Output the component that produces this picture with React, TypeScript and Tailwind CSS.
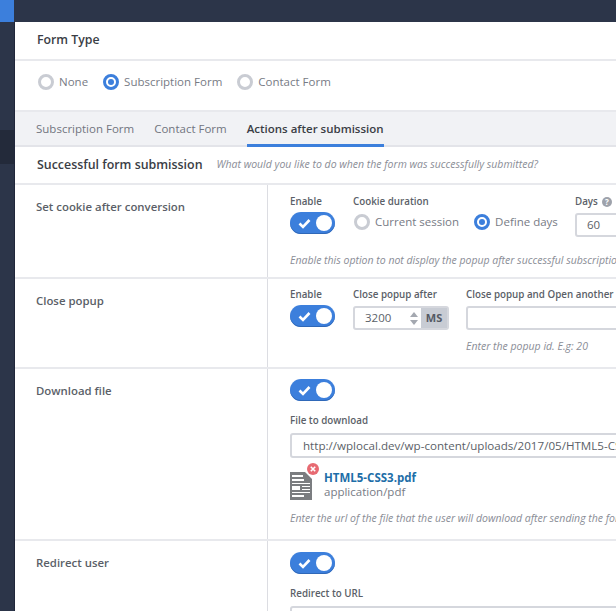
import React from "react";

const font = { fontFamily: '"Open Sans", "Noto Sans", sans-serif' };

function Radio({ on, label }: { on?: boolean; label: string }) {
  return (
    <div className="flex items-center gap-[5px] shrink-0">
      {on ? (
        <span className="w-[16px] h-[16px] rounded-full border-[3px] border-[#3c7fdc] flex items-center justify-center bg-white">
          <span className="w-[6px] h-[6px] rounded-full bg-[#3c7fdc]" />
        </span>
      ) : (
        <span className="w-[16px] h-[16px] rounded-full border-[3px] border-[#c9ccd3] bg-white" />
      )}
      <span className="text-[11.5px] text-[#777b85]">{label}</span>
    </div>
  );
}

function Toggle() {
  return (
    <div className="w-[45px] h-[22px] rounded-full bg-[#3c7fdc] flex items-center justify-between pl-[8px] pr-[3px] shadow-[inset_0_-1px_0_#2f68b8]">
      <svg width="13" height="11" viewBox="0 0 13 11" fill="none">
        <path d="M1.5 5.5 L5 9 L11.5 2" stroke="white" strokeWidth="2.6" />
      </svg>
      <span className="w-[16px] h-[16px] rounded-full bg-white" />
    </div>
  );
}

function Label({ children }: { children: React.ReactNode }) {
  return <div className="text-[9.8px] leading-[14px] text-[#5b5f68] font-semibold whitespace-nowrap">{children}</div>;
}

function Hint({ children }: { children: React.ReactNode }) {
  return <div className="text-[10.5px] italic text-[#8a8d96] whitespace-nowrap leading-[14px]">{children}</div>;
}

function Row({ title, className, children }: { title: string; className: string; children: React.ReactNode }) {
  return (
    <div className={`flex border-b-2 border-[#e8e9ed] ${className}`}>
      <div className="w-[253px] shrink-0 border-r border-[#dcdde2] pl-[21px] pt-[13px] text-[11.4px] font-semibold text-[#5b5f68]">
        {title}
      </div>
      <div className="pl-[22px] min-w-0 w-[700px] shrink-0">{children}</div>
    </div>
  );
}

export default function App() {
  return (
    <div className="w-[616px] h-[611px] overflow-hidden flex bg-[#2c3549]" style={font}>
      <div className="w-[14px] shrink-0 flex flex-col">
        <div className="h-[22px] bg-[#3c7fdc] shrink-0" />
        <div className="h-[108px] shrink-0 bg-[#2c3549]" />
        <div className="h-[34px] shrink-0 bg-[#232a3a]" />
      </div>
      <div className="flex-1 min-w-0 flex flex-col">
        <div className="h-[22px] bg-[#2c3549] shrink-0" />
        <div className="flex-1 bg-white border-l border-[#20263a] flex flex-col overflow-hidden">
          <div className="h-[39px] shrink-0 border-b-2 border-[#e8e9ed] flex items-center pl-[22px] text-[12.3px] font-semibold text-[#3a3d45]">
            Form Type
          </div>
          <div className="h-[51px] shrink-0 border-b-2 border-[#e8e9ed] flex items-start pt-[12px] pl-[23px] gap-[15px]">
            <Radio label="None" />
            <Radio on label="Subscription Form" />
            <Radio label="Contact Form" />
          </div>
          <div className="h-[35px] shrink-0 bg-[#f1f2f5] border-b-2 border-[#e3e4e9] flex items-start pl-[21px] gap-[20px] text-[11.5px] text-[#72757f]">
            <span className="pt-[8px]">Subscription Form</span>
            <span className="pt-[8px]">Contact Form</span>
            <span className="h-[35px] pt-[8px] border-b-[3px] border-[#3c7fdc] font-semibold text-[#3a3d45]">
              Actions after submission
            </span>
          </div>
          <div className="h-[38px] shrink-0 border-b-2 border-[#e8e9ed] flex items-center pl-[22px] gap-[14px] whitespace-nowrap">
            <span className="text-[12.4px] font-semibold text-[#3a3d45]">Successful form submission</span>
            <span className="text-[10.5px] italic text-[#8a8d96]">What would you like to do when the form was successfully submitted?</span>
          </div>

          <Row title="Set cookie after conversion" className="h-[94px] shrink-0">
            <div className="flex pt-[10px]">
              <div className="w-[63px] shrink-0">
                <Label>Enable</Label>
                <div className="mt-[3px]"><Toggle /></div>
              </div>
              <div className="w-[222px] shrink-0">
                <Label>Cookie duration</Label>
                <div className="flex gap-[15px] mt-[4px] pl-[1px]">
                  <Radio label="Current session" />
                  <Radio on label="Define days" />
                </div>
              </div>
              <div>
                <div className="flex items-center gap-[4px]">
                  <Label>Days</Label>
                  <span className="w-[10px] h-[10px] rounded-full bg-[#9ea2ab] text-white text-[8px] leading-[10px] text-center font-bold">?</span>
                </div>
                <div className="mt-[4px] w-[60px] h-[24px] rounded-[3px] border-2 border-[#d5d7dd] pl-[10px] flex items-center text-[11.5px] text-[#5b5f68]">60</div>
              </div>
            </div>
            <div className="mt-[16px]"><Hint>Enable this option to not display the popup after successful subscription or conversion</Hint></div>
          </Row>

          <Row title="Close popup" className="h-[90px] shrink-0">
            <div className="flex pt-[9px]">
              <div className="w-[63px] shrink-0">
                <Label>Enable</Label>
                <div className="mt-[3px]"><Toggle /></div>
              </div>
              <div className="w-[113px] shrink-0">
                <Label>Close popup after</Label>
                <div className="mt-[4px] w-[96px] h-[24px] rounded-[3px] border-2 border-[#d5d7dd] flex items-stretch">
                  <span className="flex-1 flex items-center pl-[10px] text-[11.5px] text-[#5b5f68]">3200</span>
                  <span className="w-[14px] flex flex-col items-center justify-center gap-[3px]">
                    <span className="w-0 h-0 border-x-[4px] border-x-transparent border-b-[5px] border-b-[#a4a8b0]" />
                    <span className="w-0 h-0 border-x-[4px] border-x-transparent border-t-[5px] border-t-[#a4a8b0]" />
                  </span>
                  <span className="w-[26px] bg-[#c8ccd4] flex items-center justify-center text-[11px] font-bold text-[#555a64]">MS</span>
                </div>
              </div>
              <div>
                <Label>Close popup and Open another</Label>
                <div className="mt-[4px] w-[300px] h-[24px] rounded-[3px] border-2 border-[#d5d7dd]" />
                <div className="mt-[9px]"><Hint>Enter the popup id. E.g: 20</Hint></div>
              </div>
            </div>
          </Row>

          <Row title="Download file" className="h-[172px] shrink-0">
            <div className="pt-[10px]">
              <Toggle />
              <div className="mt-[13px]"><Label>File to download</Label></div>
              <div className="mt-[5px] w-[400px] h-[25px] rounded-[3px] border-2 border-[#d5d7dd] pl-[11px] flex items-center text-[11.6px] text-[#5b5f68] whitespace-nowrap overflow-hidden">
                http://wplocal.dev/wp-content/uploads/2017/05/HTML5-CSS3.pdf
              </div>
              <div className="mt-[5px] flex">
                <div className="relative w-[34px] h-[37px] shrink-0">
                  <svg width="22" height="28" viewBox="0 0 22 28" className="absolute left-0 top-[9px]">
                    <path d="M0 0H15L22 7V28H0Z" fill="#7b7d80" />
                    <path d="M2 3h11v2H2zM2 7h12v2H2zM2 11h18v1H2zM2 14h8v4H2zM12 14h8v1H12zM12 17h8v1H12zM2 20h18v1H2zM2 23h12v2H2z" fill="#fff" />
                  </svg>
                  <span className="absolute left-[17px] top-0 w-[12px] h-[12px] rounded-full bg-[#e76a72] flex items-center justify-center">
                    <svg width="6" height="6" viewBox="0 0 6 6"><path d="M0.8 0.8L5.2 5.2M5.2 0.8L0.8 5.2" stroke="#fff" strokeWidth="1.6" /></svg>
                  </span>
                </div>
                <div className="pt-[7px]">
                  <div className="text-[11.5px] leading-[15px] font-bold text-[#1d6ea8]">HTML5-CSS3.pdf</div>
                  <div className="text-[11.5px] leading-[14px] text-[#777b85]">application/pdf</div>
                </div>
              </div>
              <div className="mt-[11px]"><Hint>Enter the url of the file that the user will download after sending the form</Hint></div>
            </div>
          </Row>

          <Row title="Redirect user" className="h-[100px] shrink-0 border-b-0">
            <div className="pt-[11px]">
              <Toggle />
              <div className="mt-[13px]"><Label>Redirect to URL</Label></div>
              <div className="mt-[5px] w-[400px] h-[25px] rounded-[3px] border-2 border-[#d5d7dd]" />
            </div>
          </Row>
        </div>
      </div>
    </div>
  );
}
